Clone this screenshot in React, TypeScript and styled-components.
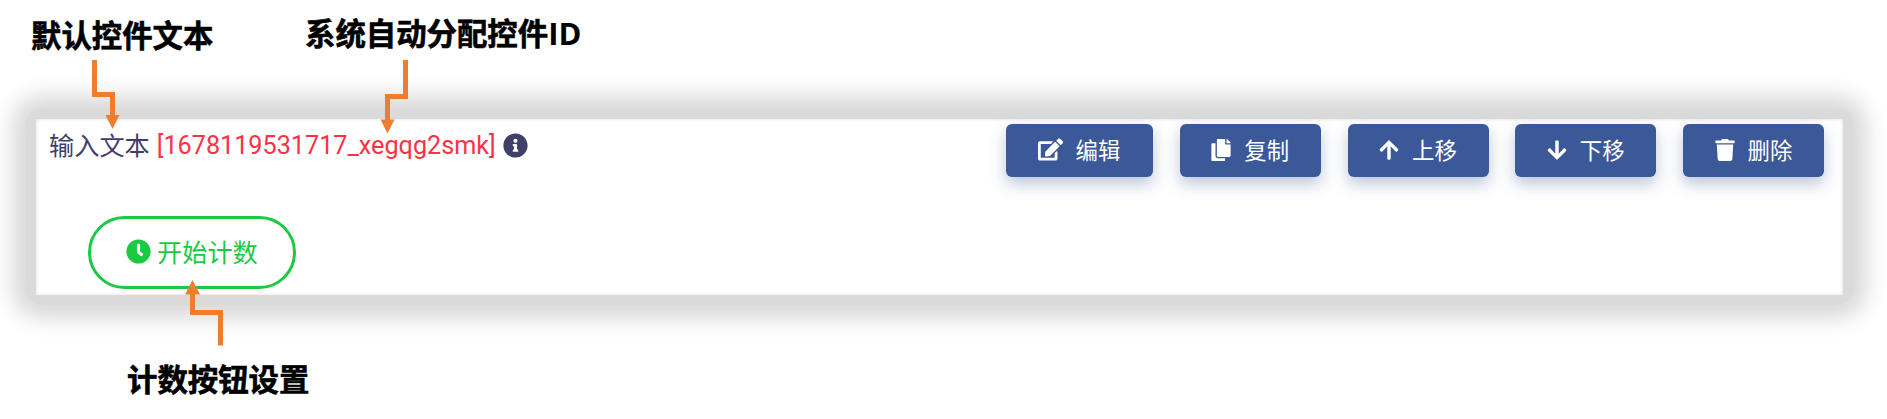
import React from 'react';
import styled, { createGlobalStyle } from 'styled-components';
import { FaEdit, FaCopy, FaArrowUp, FaArrowDown, FaTrash, FaInfoCircle, FaClock } from 'react-icons/fa';

const GlobalStyle = createGlobalStyle`
  * { box-sizing: border-box; }
  body { margin: 0; background: #fff; font-family: Roboto, "Noto Sans CJK SC", sans-serif; }
`;

const Page = styled.main`
  position: relative;
  height: 419px;
  padding: 119px 44px 0 36px;
  overflow: hidden;
`;

const Panel = styled.section`
  position: relative;
  isolation: isolate;
  height: 176px;
  background: #fff;

  &::before {
    content: '';
    position: absolute;
    z-index: -2;
    inset: -10px;
    border-radius: 16px;
    background: #dadada;
    box-shadow: 0 0 21px 14px #dadada;
  }

  &::after {
    content: '';
    position: absolute;
    z-index: -1;
    inset: 0;
    background: #fff;
    box-shadow: inset 0 0 3px 1px #ebebeb;
  }
`;

const Header = styled.header`
  display: flex;
  justify-content: space-between;
  align-items: flex-start;
  padding: 5px 19px 0 13px;
`;

const Title = styled.div`
  display: flex;
  align-items: center;
  height: 42px;
  font-size: 25.2px;
  line-height: 42px;
  color: #3f4069;
  white-space: pre;
  font-weight: 400;
  & > svg { margin-left: 7px; }
`;

const Label = styled.span`
  position: relative;
  top: -1px;
  font-family: "Noto Sans CJK SC", sans-serif;
`;

const ControlId = styled.span`
  margin-left: 7px;
  color: #fb3146;
  position: relative;
  top: 1px;
`;

const Toolbar = styled.div`
  display: flex;
  gap: 26.75px;
`;

const ToolButton = styled.button<{ $width: number }>`
  display: flex;
  align-items: center;
  width: ${p => p.$width}px;
  height: 53px;
  padding: 0 0 2px 31.5px;
  border: 0;
  border-radius: 6px;
  background: #3b5998;
  color: #fff;
  font: 400 22.4px/51px "Noto Sans CJK SC", sans-serif;
  box-shadow: 0 7px 16px rgba(59, 89, 152, 0.35);
`;

const ToolIcon = styled.span<{ $width: number }>`
  display: flex;
  width: ${p => p.$width}px;
  margin-right: 13px;
  justify-content: center;
`;

const CountButton = styled.button`
  display: flex;
  align-items: center;
  gap: 6px;
  width: 208px;
  height: 73px;
  margin: 39px 0 0 52px;
  padding: 0 0 2px 35px;
  border: 3px solid #1bc943;
  border-radius: 37px;
  background: #fff;
  color: #1bc943;
  font: 400 25.2px/1 "Noto Sans CJK SC", sans-serif;
`;

const Callout = styled.div<{ $x: number; $y: number }>`
  position: absolute;
  left: ${p => p.$x}px;
  top: ${p => p.$y}px;
  font: 700 30.4px/40px "Noto Sans CJK SC", sans-serif;
  -webkit-text-stroke: 0.6px #000;
  color: #000;
  white-space: nowrap;
`;

const Latin = styled.span`
  font-family: "Open Sans", sans-serif;
  font-size: 31px;
  line-height: 1;
  -webkit-text-stroke: 0;
`;

const Arrows = styled.svg`
  position: absolute;
  inset: 0;
  pointer-events: none;
`;

const tools = [
  { label: '编辑', icon: <FaEdit size={25} />, width: 147, iconWidth: 25 },
  { label: '复制', icon: <FaCopy size={22} />, width: 141, iconWidth: 20 },
  { label: '上移', icon: <FaArrowUp size={22} />, width: 141, iconWidth: 20 },
  { label: '下移', icon: <FaArrowDown size={22} />, width: 141, iconWidth: 20 },
  { label: '删除', icon: <FaTrash size={22} />, width: 141, iconWidth: 20 },
];

const arrows = [
  { line: 'M94.5 60V94.5H112.5V117', head: 'M105.5 115H119.5L112.5 129Z' },
  { line: 'M405.5 60V96.5H387.5V121', head: 'M380.5 119.5H394.5L387.5 133.5Z' },
  { line: 'M220.5 345.5V312.5H192.5V293', head: 'M185 294.5H200L192.5 280Z' },
];

export default function App() {
  return (
    <>
      <GlobalStyle />
      <Page>
        <Panel>
          <Header>
            <Title>
              <Label>输入文本</Label>
              <ControlId>[1678119531717_xegqg2smk]</ControlId>
              <FaInfoCircle size={25} />
            </Title>
            <Toolbar>
              {tools.map(t => (
                <ToolButton key={t.label} $width={t.width}>
                  <ToolIcon $width={t.iconWidth}>{t.icon}</ToolIcon>
                  {t.label}
                </ToolButton>
              ))}
            </Toolbar>
          </Header>
          <CountButton>
            <FaClock size={25} />
            开始计数
          </CountButton>
        </Panel>
        <Callout $x={31} $y={14}>默认控件文本</Callout>
        <Callout $x={305} $y={12}>系统自动分配控件<Latin>ID</Latin></Callout>
        <Callout $x={127} $y={358}>计数按钮设置</Callout>
        <Arrows width="1887" height="419">
          {arrows.map(a => (
            <g key={a.line}>
              <path d={a.line} fill="none" stroke="#ed7d31" strokeWidth="5" />
              <path d={a.head} fill="#ed7d31" />
            </g>
          ))}
        </Arrows>
      </Page>
    </>
  );
}
